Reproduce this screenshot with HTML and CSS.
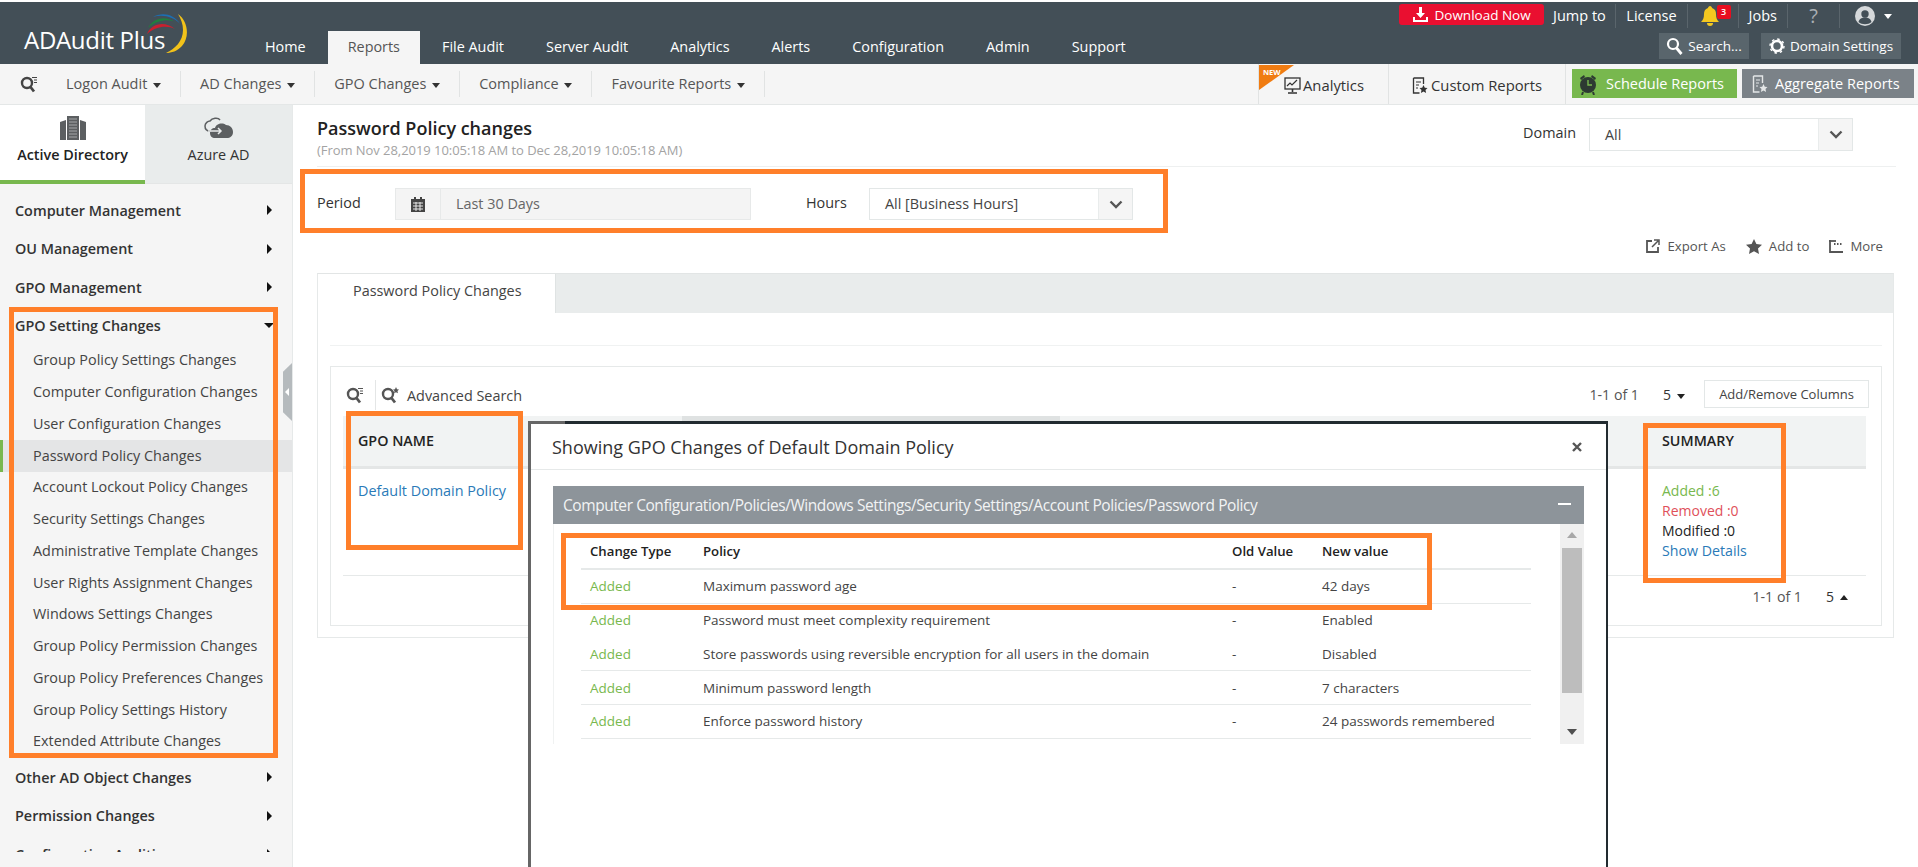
FILE: index.html
```html
<!DOCTYPE html>
<html lang="en">
<head>
<meta charset="utf-8">
<title>ADAudit Plus - Password Policy changes</title>
<link rel="stylesheet" href="styles.css">
</head>
<body>
<div class="app">
  <header class="topbar">
    <div class="logo">
      <span class="logo-text">ADAudit Plus</span>
      <svg class="logo-arcs" width="44" height="42" viewBox="0 0 44 42" fill="none">
        <path d="M3 15C8 5 20 2 30 9C25 6 13 6 3 15Z" fill="#1f7f3f"/>
        <path d="M8 4C17 -1 29 1 35 11C29 4 18 1 8 4Z" fill="#1c6fb4"/>
        <path d="M2 21C6 11 19 7 30 16C22 12 11 13 2 21Z" fill="#c8202f"/>
        <path d="M33 1C43 8 45 24 37 33C32 38 27 40 21 40C30 36 38 28 38 17C38 11 36 6 33 1Z" fill="#f2c21a"/>
      </svg>
    </div>
    <nav class="mainnav">
      <a class="mainnav-item">Home</a>
      <a class="mainnav-item is-active">Reports</a>
      <a class="mainnav-item">File Audit</a>
      <a class="mainnav-item">Server Audit</a>
      <a class="mainnav-item">Analytics</a>
      <a class="mainnav-item">Alerts</a>
      <a class="mainnav-item">Configuration</a>
      <a class="mainnav-item">Admin</a>
      <a class="mainnav-item">Support</a>
    </nav>
    <div class="util">
      <div class="util-row">
        <a class="download">
          <svg width="17" height="17" viewBox="0 0 17 17" fill="#fff"><path d="M7 1h3v6h3l-4.500 5L4 7h3z"/><path d="M1 11h2v3h11v-3h2v5H1z"/></svg>
          Download Now
        </a>
        <a class="util-link first">Jump to</a>
        <a class="util-link">License</a>
        <a class="util-link bell">
          <svg width="18" height="22" viewBox="0 0 18 22" fill="#f4c820"><path d="M9 1c1 0 2 1 2 2 3 1 4 3 4 6 0 4 1 6 3 8H0c2-2 3-4 3-8 0-3 1-5 4-6 0-1 1-2 2-2z"/><path d="M6 18h6c0 2-1 3-3 3s-3-1-3-3z"/></svg>
          <span class="badge">3</span>
        </a>
        <a class="util-link">Jobs</a>
        <a class="util-link help">?</a>
        <a class="util-link user">
          <svg class="avatar" width="20" height="20" viewBox="0 0 20 20"><circle cx="10" cy="10" r="10" fill="#d5d8da"/><circle cx="10" cy="8" r="3.700" fill="#434f57"/><path d="M3.500 16c1-3.500 3.500-4.500 6.500-4.500s5.500 1 6.500 4.500c-3.500 3-9.500 3-13 0z" fill="#434f57"/></svg>
          <i class="caret caret-light"></i>
        </a>
      </div>
      <div class="util-row util-row-2">
        <a class="util-btn search-btn">
          <svg width="17" height="18" viewBox="0 0 17 18" fill="none" stroke="#fff" stroke-width="2.200"><circle cx="7" cy="7" r="5"/><path d="M10.500 11l5 6" stroke-width="2.800"/></svg>
          Search...
        </a>
        <a class="util-btn settings-btn">
          <svg width="16" height="16" viewBox="0 0 16 16" fill="none" stroke="#fff"><circle cx="8" cy="8" r="5" stroke-width="2.600"/><circle cx="8" cy="8" r="7" stroke-width="1.400" stroke-dasharray="2.500 3"/></svg>
          Domain Settings
        </a>
      </div>
    </div>
  </header>

  <div class="subnav">
    <div class="subnav-left">
      <span class="subnav-search">
        <svg width="18" height="18" viewBox="0 0 18 18" fill="none" stroke="#444"><circle cx="7" cy="8" r="5" stroke-width="2.400"/><path d="M10.500 12l3.500 4.500" stroke-width="2.800"/><path d="M12 2.500h5M14 5h3M14 7.500h3" stroke-width="1"/></svg>
      </span>
      <a class="subnav-item">Logon Audit <i class="caret"></i></a>
      <a class="subnav-item">AD Changes <i class="caret"></i></a>
      <a class="subnav-item">GPO Changes <i class="caret"></i></a>
      <a class="subnav-item">Compliance <i class="caret"></i></a>
      <a class="subnav-item">Favourite Reports <i class="caret"></i></a>
    </div>
    <div class="subnav-right">
      <a class="sub-cell cell-analytics">
        <span class="new-flag">NEW</span>
        <svg width="17" height="17" viewBox="0 0 17 17" fill="none" stroke="#333"><rect x="1" y="1" width="15" height="11" stroke-width="1.300"/><path d="M3 9l3-3 2 2 5-5" stroke-width="1.200"/><path d="M8.500 12v3M4 16h9" stroke-width="1.600"/></svg>
        Analytics
      </a>
      <a class="sub-cell cell-custom">
        <svg width="16" height="17" viewBox="0 0 16 17" fill="none" stroke="#333"><path d="M1.500 1h10v6M1.500 1v15h6" stroke-width="1.300"/><path d="M4 5h5M4 8h3M4 11h2" stroke-width="1.200"/><path d="M11.500 8l1.300 2.800 2.700.3-2 2 .6 3-2.600-1.500-2.600 1.500.6-3-2-2 2.700-.3z" fill="#333" stroke="none"/></svg>
        Custom Reports
      </a>
      <a class="sub-btn btn-green">
        <svg width="18" height="22" viewBox="0 0 18 22"><circle cx="9" cy="12" r="8" fill="#2d3a32"/><path d="M1 5l4-3 1 2-4 3zM17 5l-4-3-1 2 4 3z" fill="#2d3a32"/><path d="M9 7v5h4" stroke="#78b84e" stroke-width="1.400" fill="none"/><path d="M4 19l-1 3M14 19l1 3" stroke="#2d3a32" stroke-width="2"/></svg>
        Schedule Reports
      </a>
      <a class="sub-btn btn-gray">
        <svg width="16" height="18" viewBox="0 0 16 18" fill="none" stroke="#e4e6e7"><path d="M1.500 1h9v7M1.500 1v16h6" stroke-width="1.400"/><path d="M4 5h4M4 8h3M4 11h2" stroke-width="1.200"/><path d="M11.500 9l1.300 2.800 2.700.3-2 2 .6 3-2.600-1.500-2.600 1.500.6-3-2-2 2.700-.3z" fill="#e4e6e7" stroke="none"/></svg>
        Aggregate Reports
      </a>
    </div>
  </div>

  <div class="content">
    <aside class="sidebar">
      <div class="side-tabs">
        <a class="side-tab is-active">
          <svg width="26" height="24" viewBox="0 0 26 24" fill="#5c5f61"><rect x="7" y="0" width="12" height="24"/><path d="M0 6l6-2v20H0zM26 6l-6-2v20h6z"/><path d="M9 3h8M9 6h8M9 9h8M9 12h8M9 15h8M9 18h8M9 21h8" stroke="#a5a8aa" stroke-width="1"/></svg>
          <span>Active Directory</span>
        </a>
        <a class="side-tab">
          <svg width="30" height="24" viewBox="0 0 30 24"><path d="M6 15c-3 0-5-2-5-5s3-5 5-5c2-3 8-4 10-1" fill="none" stroke="#5c5f61" stroke-width="1.500"/><path d="M11 22c-3 0-5-2-5-5s2-5 5-5c1-4 7-6 11-3 4 0 7 3 7 7s-3 6-6 6z" fill="#5c5f61"/><path d="M4 15h13m-3-3l3 3-3 3" fill="none" stroke="#e9ecec" stroke-width="1.500"/></svg>
          <span>Azure AD</span>
        </a>
      </div>
      <div class="side-list">
        <a class="side-group">Computer Management<i class="arrow"></i></a>
        <a class="side-group">OU Management<i class="arrow"></i></a>
        <a class="side-group">GPO Management<i class="arrow"></i></a>
        <a class="side-group">GPO Setting Changes<i class="arrow arrow-down"></i></a>
        <a class="side-item">Group Policy Settings Changes</a>
        <a class="side-item">Computer Configuration Changes</a>
        <a class="side-item">User Configuration Changes</a>
        <a class="side-item is-active">Password Policy Changes</a>
        <a class="side-item">Account Lockout Policy Changes</a>
        <a class="side-item">Security Settings Changes</a>
        <a class="side-item">Administrative Template Changes</a>
        <a class="side-item">User Rights Assignment Changes</a>
        <a class="side-item">Windows Settings Changes</a>
        <a class="side-item">Group Policy Permission Changes</a>
        <a class="side-item">Group Policy Preferences Changes</a>
        <a class="side-item">Group Policy Settings History</a>
        <a class="side-item">Extended Attribute Changes</a>
        <a class="side-group">Other AD Object Changes<i class="arrow"></i></a>
        <a class="side-group">Permission Changes<i class="arrow"></i></a>
        <a class="side-group">Configuration Auditing<i class="arrow"></i></a>
      </div>
      <span class="side-handle"></span>
    </aside>

    <main class="main">
      <div class="page-head">
        <div>
          <h1 class="page-title">Password Policy changes</h1>
          <p class="page-sub">(From Nov 28,2019 10:05:18 AM to Dec 28,2019 10:05:18 AM)</p>
        </div>
        <div class="domain">
          <span class="field-label">Domain</span>
          <div class="select select-domain"><span class="select-text">All</span><span class="select-arrow"><svg width="14" height="9" viewBox="0 0 14 9" fill="none" stroke="#555" stroke-width="2.400"><path d="M1.500 1.500L7 7l5.500-5.500"/></svg></span></div>
        </div>
      </div>

      <div class="filters">
        <span class="field-label label-period">Period</span>
        <div class="period">
          <span class="period-icon"><svg width="14" height="15" viewBox="0 0 14 15" fill="#444"><path d="M3 0h2v2h4V0h2v2h3v13H0V2h3z"/><path d="M2 6h10M2 9h10M2 12h10M5 5v9M9 5v9" stroke="#f5f5f5" stroke-width=".9"/></svg></span>
          <span class="period-text">Last 30 Days</span>
        </div>
        <span class="field-label label-hours">Hours</span>
        <div class="select select-hours"><span class="select-text">All [Business Hours]</span><span class="select-arrow"><svg width="14" height="9" viewBox="0 0 14 9" fill="none" stroke="#555" stroke-width="2.400"><path d="M1.500 1.500L7 7l5.500-5.500"/></svg></span></div>
      </div>

      <div class="actions">
        <a class="action">
          <svg width="14" height="14" viewBox="0 0 14 14" fill="none" stroke="#555" stroke-width="1.800"><path d="M6 2H1v11h11V8"/><path d="M6 8l6-6M8 1h5v5" stroke-width="1.500"/></svg>
          Export As
        </a>
        <a class="action">
          <svg width="16" height="15" viewBox="0 0 16 15" fill="#555"><path d="M8 0l2.400 5 5.600.7-4 3.800 1 5.500L8 12.300 3 15l1-5.500-4-3.800L5.600 5z"/></svg>
          Add to
        </a>
        <a class="action">
          <svg width="14" height="13" viewBox="0 0 14 13" fill="none" stroke="#555" stroke-width="1.800"><path d="M1 0v12h13"/><path d="M5 4h1.500M8 4h1.500M11 4h1.500" stroke-width="2.200"/><path d="M0 1h7"/></svg>
          More
        </a>
      </div>

      <section class="panel">
        <div class="panel-tabs"><a class="panel-tab">Password Policy Changes</a></div>
        <div class="panel-body">
          <div class="report">
            <div class="toolbar">
              <span class="tool-icon">
                <svg width="18" height="18" viewBox="0 0 18 18" fill="none" stroke="#555"><circle cx="7" cy="8" r="5" stroke-width="2.400"/><path d="M10.500 12l3.500 4.500" stroke-width="2.800"/><path d="M12 2.500h5M14 5h3M14 7.500h3" stroke-width="1"/></svg>
              </span>
              <span class="tool-sep"></span>
              <span class="tool-adv">
                <svg width="19" height="18" viewBox="0 0 19 18" fill="none" stroke="#555"><circle cx="7" cy="8" r="5" stroke-width="2.400"/><path d="M10.500 12l3.500 4.500" stroke-width="2.800"/><path d="M15 1l1 2.200 2 .3-1.500 1.500.4 2.200-1.900-1-1.900 1 .4-2.200L12 3.500l2-.3z" fill="#555" stroke="none"/></svg>
                Advanced Search
              </span>
              <span class="pager">1-1 of 1</span>
              <span class="pager-size">5 <i class="caret caret-dark"></i></span>
              <a class="columns-btn">Add/Remove Columns</a>
            </div>
            <table class="grid">
              <colgroup><col class="c1"><col class="c2"><col class="c3"><col class="c4"></colgroup>
              <thead><tr><th>GPO NAME</th><th class="sorted"></th><th></th><th>SUMMARY</th></tr></thead>
              <tbody><tr>
                <td><a class="link">Default Domain Policy</a></td>
                <td></td>
                <td></td>
                <td>
                  <div class="sum added">Added :6</div>
                  <div class="sum removed">Removed :0</div>
                  <div class="sum">Modified :0</div>
                  <div class="sum"><a class="link">Show Details</a></div>
                </td>
              </tr></tbody>
            </table>
            <div class="foot-pager"><span class="pager">1-1 of 1</span><span class="pager-size">5 <i class="caret caret-up"></i></span></div>
          </div>
        </div>
      </section>
    </main>
  </div>

  <div class="modal">
    <div class="modal-head">
      <span class="modal-title">Showing GPO Changes of Default Domain Policy</span>
      <svg class="modal-close" width="10" height="10" viewBox="0 0 10 10" stroke="#555" stroke-width="2.400"><path d="M1 1l8 8M9 1l-8 8"/></svg>
    </div>
    <div class="modal-body">
      <div class="section-bar">
        <span>Computer Configuration/Policies/Windows Settings/Security Settings/Account Policies/Password Policy</span>
        <i class="minus"></i>
      </div>
      <div class="section-content">
        <div class="changes">
          <div class="ch-row ch-head"><span>Change Type</span><span>Policy</span><span>Old Value</span><span>New value</span></div>
          <div class="ch-row"><span class="added">Added</span><span>Maximum password age</span><span>-</span><span>42 days</span></div>
          <div class="ch-row no-line"><span class="added">Added</span><span>Password must meet complexity requirement</span><span>-</span><span>Enabled</span></div>
          <div class="ch-row"><span class="added">Added</span><span>Store passwords using reversible encryption for all users in the domain</span><span>-</span><span>Disabled</span></div>
          <div class="ch-row"><span class="added">Added</span><span>Minimum password length</span><span>-</span><span>7 characters</span></div>
          <div class="ch-row"><span class="added">Added</span><span>Enforce password history</span><span>-</span><span>24 passwords remembered</span></div>
        </div>
        <div class="scrollbar">
          <i class="sb-up"></i>
          <span class="sb-track"><span class="sb-thumb"></span></span>
          <i class="sb-down"></i>
        </div>
      </div>
    </div>
  </div>

  <span class="mark mark-sidebar"></span>
  <span class="mark mark-filters"></span>
  <span class="mark mark-gpo"></span>
  <span class="mark mark-summary"></span>
  <span class="mark mark-changes"></span>
</div>
</body>
</html>
```
FILE: styles.css
```css
* { box-sizing: border-box; }
html, body { margin: 0; padding: 0; background: #fff; }
body { font-family: "Open Sans", "Liberation Sans", sans-serif; font-size: 14.400px; color: #333; }
a { color: inherit; text-decoration: none; }
i { display: inline-block; font-style: normal; }

.app { position: relative; width: 1918px; height: 867px; overflow: hidden; padding-top: 2px; background: #fff; display: flex; flex-direction: column; }

/* top bar */
.topbar { height: 62px; flex: none; background: #434f57; display: flex; align-items: stretch; position: relative; }
.logo { width: 245px; flex: none; position: relative; padding: 22px 0 0 24px; }
.logo-text { color: #fff; font-size: 24px; line-height: 32px; letter-spacing: -.3px; white-space: nowrap; }
.logo-arcs { position: absolute; left: 145px; top: 11px; }
.mainnav { display: flex; align-items: flex-end; gap: 2px; }
.mainnav-item { height: 33px; line-height: 32px; padding: 0 20px; color: #fff; white-space: nowrap; font-size: 14.400px; }
.mainnav-item.is-active { background: #f5f5f5; color: #555; }

.util { margin-left: auto; padding-right: 17px; display: flex; flex-direction: column; align-items: flex-end; }
.util-row { display: flex; align-items: center; height: 24px; margin-top: 2px; color: #fff; }
.download { width: 145px; height: 21px; align-self: flex-start; background: #ea0f30; border-radius: 3px; color: #fff; font-size: 13.500px; display: flex; align-items: center; justify-content: center; gap: 5px; white-space: nowrap; }
.util-link { height: 24px; line-height: 24px; padding: 0 10px; border-left: 1px solid #5a656c; color: #fff; white-space: nowrap; position: relative; display: flex; align-items: center; font-size: 14.500px; }
.util-link.first { border-left: 0; padding: 0 9.500px 0 9px; }
.bell { width: 51px; padding-left: 13px; }
.badge { position: absolute; left: 29px; top: 1px; width: 14px; height: 14px; background: #e80d1f; border-radius: 2px; color: #fff; font-size: 9px; line-height: 14px; text-align: center; font-weight: 600; }
.help { width: 52px; justify-content: center; font-size: 20px; color: #aab0b4; }
.user { width: 62px; padding-left: 15px; gap: 9px; }
.avatar { flex: none; }
.util-row-2 { height: 26px; margin-top: 5px; gap: 12px; }
.util-btn { height: 26px; background: #59656c; color: #fff; font-size: 13.500px; display: flex; align-items: center; justify-content: center; gap: 5px; white-space: nowrap; }
.search-btn { width: 90px; }
.settings-btn { width: 140px; }

.caret { width: 0; height: 0; border-left: 4px solid transparent; border-right: 4px solid transparent; border-top: 5px solid #333; vertical-align: middle; margin-left: 2px; flex: none; }
.caret-light { border-top-color: #fff; margin-left: 0; }
.caret-dark { border-top-color: #222; }
.caret-up { border-top: 0; border-bottom: 5px solid #222; }

/* sub nav */
.subnav { height: 41px; flex: none; background: #f5f5f5; border-bottom: 1px solid #e4e7e7; display: flex; justify-content: space-between; }
.subnav-left { display: flex; align-items: center; }
.subnav-search { width: 47px; padding-left: 20px; display: flex; }
.subnav-item { height: 26px; line-height: 26px; padding: 0 19px; border-right: 1px solid #e1e3e3; color: #555; white-space: nowrap; font-size: 14.500px; }
.subnav-right { display: flex; align-items: stretch; padding-right: 4px; }
.sub-cell { position: relative; display: flex; align-items: center; justify-content: center; gap: 3px; border-left: 1px solid #e1e3e3; color: #333; font-weight: 500; white-space: nowrap; padding-top: 2px; font-size: 14.800px; }
.cell-analytics { width: 130px; padding-left: 25px; justify-content: flex-start; gap: 2px; }
.cell-custom { width: 178px; border-right: 1px solid #e1e3e3; }
.new-flag { position: absolute; left: 0; top: 1px; width: 35px; height: 25px; background: #f07c12; clip-path: polygon(0 0, 100% 0, 0 100%); color: #fff; font-size: 7.500px; font-weight: 700; line-height: 11px; padding: 2px 0 0 4px; }
.sub-btn { align-self: flex-start; margin-top: 5px; height: 29px; display: flex; align-items: center; gap: 9px; color: #fff; white-space: nowrap; font-size: 14.500px; padding-left: 7px; }
.btn-green { width: 165px; margin-left: 6px; background: #78b84e; }
.btn-gray { width: 172px; margin-left: 5px; background: #7b8288; padding-left: 10px; gap: 7px; }

/* content */
.content { flex: 1; display: flex; min-height: 0; }
.sidebar { position: relative; width: 293px; flex: none; background: #f5f5f5; border-right: 1px solid #e6e9e9; }
.side-tabs { display: flex; height: 79px; }
.side-tab { flex: 1; background: #e9ecec; color: #333; display: flex; flex-direction: column; align-items: center; padding-top: 11px; gap: 5px; border-bottom: 1px solid #e4e6e6; }
.side-tab.is-active { flex: none; width: 145px; background: #fff; font-weight: 600; color: #222; border-bottom: 4px solid #78b84e; }
.side-list { height: 668px; padding-top: 7px; overflow: hidden; }
.side-group { height: 38.500px; display: flex; align-items: center; justify-content: space-between; padding: 0 20px 0 15px; font-weight: 600; color: #333; white-space: nowrap; }
.side-item { display: flex; align-items: center; height: 31.750px; padding: 0 0 2px 33px; color: #444; white-space: nowrap; }
.side-item.is-active { background: #e4e5e6; box-shadow: inset 3px 0 0 #78b84e; }
.arrow { width: 0; height: 0; border-top: 5.500px solid transparent; border-bottom: 5.500px solid transparent; border-left: 5.500px solid #111; }
.arrow-down { border: 0; border-left: 5px solid transparent; border-right: 5px solid transparent; border-top: 5px solid #111; margin-right: -2px; }
.side-handle { position: absolute; right: 0; top: 258px; width: 9px; height: 58px; background: #b5babd; clip-path: polygon(100% 0, 100% 100%, 0 85%, 0 15%); }
.side-handle::after { content: ""; position: absolute; left: 2px; top: 25px; border-top: 4px solid transparent; border-bottom: 4px solid transparent; border-right: 4px solid #fff; }

.main { flex: 1; min-width: 0; padding: 0 22px 0 24px; }
.page-head { height: 62px; border-bottom: 1px solid #eef0f0; display: flex; justify-content: space-between; padding-top: 11px; }
.page-title { margin: 0; font-size: 18px; line-height: 24px; font-weight: 600; color: #222; }
.page-sub { margin: 2px 0 0; font-size: 13px; line-height: 16px; color: #a3a3a3; letter-spacing: -.05px; }
.domain { display: flex; align-items: center; height: 33px; margin: 2px 43px 0 0; }
.field-label { color: #333; white-space: nowrap; }
.domain .field-label, .filters .field-label { position: relative; top: -2px; }
.select { display: flex; height: 33px; border: 1px solid #e3e7e7; background: #fff; }
.select-domain { width: 264px; margin-left: 13px; }
.select-text { flex: 1; padding-left: 15px; line-height: 31px; color: #444; white-space: nowrap; }
.select-arrow { width: 34px; background: #f5f5f5; border-left: 1px solid #e9ecec; display: flex; align-items: center; justify-content: center; }
.filters { display: flex; align-items: center; margin-top: 21px; height: 32px; }
.label-period { width: 78px; }
.period { width: 356px; height: 32px; display: flex; background: #f4f4f4; border: 1px solid #e7e9e9; }
.period-icon { width: 45px; border-right: 1px solid #e7e9e9; display: flex; align-items: center; justify-content: center; }
.period-text { padding-left: 15px; line-height: 30px; color: #666; }
.label-hours { width: 63px; margin-left: 55px; }
.select-hours { width: 264px; height: 32px; }
.select-hours .select-text { line-height: 30px; padding-left: 15px; }
.actions { display: flex; justify-content: flex-end; gap: 20px; height: 24px; margin-top: 14px; padding-right: 13px; color: #555; font-size: 13.200px; }
.action { display: flex; align-items: center; gap: 7px; white-space: nowrap; }

.panel { margin-top: 15px; height: 365px; width: 1577px; border: 1px solid #e6e9e9; border-top-color: #e2e5e5; }
.panel-tabs { height: 39px; background: #e9ecec; }
.panel-tab { display: block; width: 238px; height: 39px; line-height: 34px; background: #fff; padding-left: 35px; color: #444; border-right: 1px solid #dfe3e3; white-space: nowrap; }
.panel-body { padding: 53px 11px 0 12px; position: relative; }
.panel-body::before { content: ""; position: absolute; left: 12px; right: 11px; top: 32px; height: 1px; background: #f0f2f2; }
.report { height: 260px; border: 1px solid #e6e9e9; padding: 14px 14px 0 12px; }
.toolbar { height: 35px; display: flex; align-items: flex-start; position: relative; top: -1px; }
.tool-icon { width: 22px; height: 30px; padding: 6px 0 0 3px; display: flex; }
.tool-sep { width: 1px; height: 30px; background: #e4e6e6; margin: 0 5px 0 10px; }
.tool-adv { display: flex; align-items: center; height: 30px; gap: 7px; color: #444; white-space: nowrap; }
.tool-adv svg { flex: none; }
.pager { margin-left: auto; color: #555; font-size: 14.200px; line-height: 30px; white-space: nowrap; }
.pager-size { margin-left: 24px; line-height: 30px; width: 41px; color: #333; font-size: 14px; white-space: nowrap; }
.columns-btn { height: 28px; width: 165px; margin-right: -2px; line-height: 26px; border: 1px solid #e3e7e7; text-align: center; font-size: 13px; color: #444; white-space: nowrap; }

.grid { border-collapse: collapse; table-layout: fixed; width: 1523px; }
.c1 { width: 339px; } .c2 { width: 378px; } .c3 { width: 587px; } .c4 { width: 219px; }
.grid th { height: 51px; background: #f1f3f3; border-bottom: 3px solid #e4e6e6; text-align: left; padding: 0 0 1px 15px; color: #222; font-weight: 600; font-size: 14.300px; }
.grid th.sorted { background: #dfe2e2; }
.grid td { height: 108px; vertical-align: top; padding: 12px 0 0 15px; border-bottom: 1px solid #e6e9e9; }
.link { color: #2a7ab8; }
.sum { line-height: 20px; color: #222; font-size: 14px; }
.sum .link { font-size: 14.200px; }
.added { color: #78b84e; }
.removed { color: #e0505a; }
.foot-pager { display: flex; justify-content: flex-end; padding: 6px 0 0; }

/* modal */
.modal { position: absolute; left: 528px; top: 421px; width: 1080px; height: 470px; background: #fff; border: 3px solid #222b30; border-left-color: #666; border-right-width: 2px; }
.modal::before { content: ""; position: absolute; left: -3px; top: -3px; width: 37px; height: 3px; background: #666; }
.modal-head { height: 46px; border-bottom: 1px solid #e6e9e9; padding-left: 21px; display: flex; align-items: center; justify-content: space-between; padding-right: 24px; }
.modal-title { font-size: 18px; color: #333; white-space: nowrap; }
.modal-body { margin: 16px 22px 0 22px; }
.section-bar { height: 38px; background: #8d949a; color: #f2f3f4; padding: 0 13px 0 10px; display: flex; align-items: center; justify-content: space-between; font-size: 15.500px; letter-spacing: -.43px; white-space: nowrap; }
.minus { width: 13px; height: 2px; background: #fff; margin-top: -2px; }
.section-content { height: 220px; display: flex; border-left: 1px solid #f0f2f2; }
.changes { flex: 1; padding: 9px 29px 0 27px; overflow: hidden; }
.ch-row { display: grid; grid-template-columns: 113px 529px 90px 1fr; height: 33.750px; align-items: center; border-bottom: 1px solid #e6e9e9; font-size: 13.500px; color: #444; }
.ch-row span { padding-left: 9px; white-space: nowrap; }
.ch-head { height: 37px; border-bottom: 2px solid #e6e9e9; color: #222; font-weight: 600; padding-top: 1px; font-size: 13.200px; }
.no-line { border-bottom-color: transparent; }
.ch-row .added { color: #78b84e; }
.scrollbar { width: 24px; flex: none; background: #f0f0f0; display: flex; flex-direction: column; align-items: center; }
.sb-up { width: 0; height: 0; margin: 8px 0 10px; border-left: 5px solid transparent; border-right: 5px solid transparent; border-bottom: 6px solid #a8a8a8; }
.sb-track { flex: 1; width: 100%; padding: 0 2px; }
.sb-thumb { display: block; height: 145px; background: #bdbdbd; }
.sb-down { width: 0; height: 0; margin: 0 0 9px; border-left: 5px solid transparent; border-right: 5px solid transparent; border-top: 6px solid #505050; }

/* orange call-outs */
.mark { position: absolute; border: 5px solid #ff7f2a; pointer-events: none; }
.mark-sidebar { left: 9px; top: 307px; width: 269px; height: 451px; }
.mark-filters { left: 300px; top: 169px; width: 868px; height: 64px; }
.mark-gpo { left: 346px; top: 411px; width: 177px; height: 139px; }
.mark-summary { left: 1643px; top: 423px; width: 143px; height: 160px; }
.mark-changes { left: 561px; top: 533px; width: 871px; height: 77px; }
```
